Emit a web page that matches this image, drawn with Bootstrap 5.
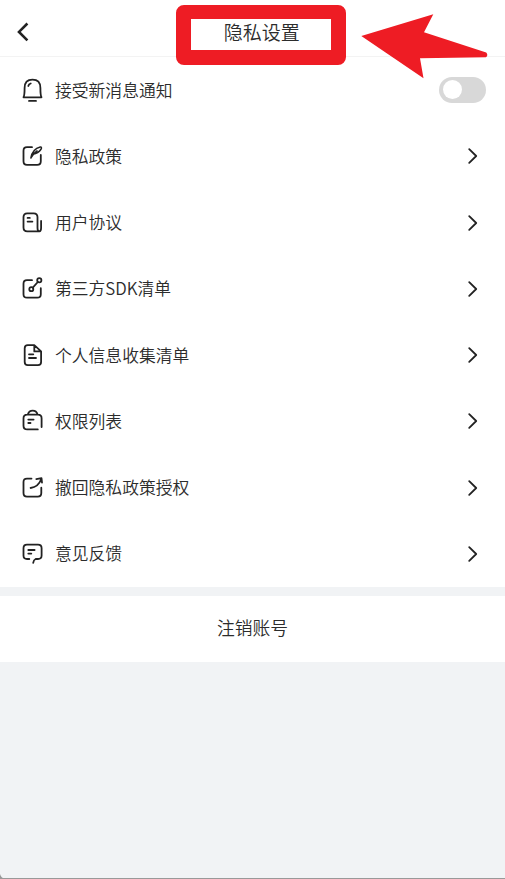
<!DOCTYPE html>
<html lang="zh-CN">
<head>
<meta charset="utf-8">
<meta name="viewport" content="width=device-width, initial-scale=1">
<title>隐私设置</title>
<link href="https://cdn.jsdelivr.net/npm/bootstrap@5.3.0/dist/css/bootstrap.min.css" rel="stylesheet">
<style>
body{font-family:"Noto Sans CJK SC",sans-serif;font-weight:350;background:#f1f3f5;color:#2c2c2c;height:879px;overflow:hidden}
.topbar{height:57px;border-bottom:1px solid #f3f3f3}
.topbar h1{font-size:19px;line-height:28px;padding:7px 0 0 18.6px;font-weight:350}
.back{left:16px;top:20px}
.frame-mark{left:176px;top:5px;width:170px;height:60px;border:15px solid #ee1c24;border-radius:8px;border-top-width:14px;z-index:2}
.arrow-mark{left:355px;top:8px;z-index:2}
.setting{height:66.25px;padding:0 19px 0 20px;font-size:16.8px}
.setting .label{margin-left:11px;flex:1;line-height:24px;padding-bottom:1.2px}
.chev{margin-right:7px}
.ico{fill:none;stroke:#222;stroke-width:1.8;stroke-linecap:round;stroke-linejoin:round;flex:none}
.toggle{width:47px;height:26px;border-radius:13px;background:#d8d8d8;padding:3px 4px 4px;border:0}
.toggle span{width:19px;height:19px;border-radius:50%;background:#fff}
.gap-band{height:9px}
.logout{height:66px;font-size:17.8px;color:#2c2c2c;font-weight:350}
.logout:hover{color:#2c2c2c}
.bottom-edge{height:1.5px;background:#999}
.bottom-edge svg{left:0;bottom:0}
</style>
<script src="https://cdn.jsdelivr.net/npm/bootstrap@5.3.0/dist/js/bootstrap.bundle.min.js"></script>
</head>
<body class="d-flex flex-column">
<header class="topbar bg-white position-relative d-flex align-items-center justify-content-center">
  <a href="#" class="back position-absolute d-block lh-1"><svg class="d-block" width="14" height="24" viewBox="0 0 14 24" fill="none" stroke="#222" stroke-width="2.6"><path d="M11.4 3.5 3 11.9l8.4 8.4"/></svg></a>
  <h1 class="m-0">隐私设置</h1>
  <div class="frame-mark position-absolute"></div>
  <svg class="arrow-mark position-absolute" width="140" height="76" viewBox="355 8 140 76"><path fill="#ee1c24" d="M361.3 36 433.3 14.2 424 32.3 486.2 52.5Q488.5 55 486 57.3L420 58.3 423.5 78.3Z"/></svg>
</header>
<main class="list-group list-group-flush bg-white rounded-0">
  <div class="setting d-flex align-items-center">
    <svg class="ico" width="24" height="24"><path d="M3.5 19.3C4.6 17.5 4.6 16.4 4.6 10 4.6 4.6 7.8 1.7 12.5 1.7s7.9 2.9 7.9 8.3c0 6.4 0 7.5 1.1 9.3Z"/><path d="M8.3 8Q8.8 6 10.7 5.5M9 22.9h7"/></svg>
    <span class="label">接受新消息通知</span>
    <button class="toggle d-flex align-items-center" aria-label="接受新消息通知"><span></span></button>
  </div>
  <div class="setting d-flex align-items-center">
    <svg class="ico" width="24" height="24"><path d="M12 3.2H7Q3.5 3.2 3.5 6.7V17.3Q3.5 20.9 7 20.9H17.2Q20.8 20.9 20.8 17.3V11"/><path stroke-width="1.5" d="M10.9 14C11.8 9 15.2 4.4 20.2 3.1 21.6 2.8 21.8 4.1 21 5.2 19.2 7.8 16 9.6 13 10.2M10.9 14Q13 9.4 17 6.8"/></svg>
    <span class="label">隐私政策</span>
    <svg class="ico chev" width="12" height="18"><path d="m2.2 2.2 7 6.8-7 6.8"/></svg>
  </div>
  <div class="setting d-flex align-items-center">
    <svg class="ico" width="24" height="24"><path d="M7.3 2.3h6.4q3.8 0 3.8 3.8v11q0 3.2 1.8 3.2 1.8-.2 1.8-3.4V9.9M7.3 2.3Q3.5 2.3 3.5 6.1V16.5Q3.5 20.3 7.3 20.3H18.9M7.6 6.9H9.8M7.6 10.6h4.8"/></svg>
    <span class="label">用户协议</span>
    <svg class="ico chev" width="12" height="18"><path d="m2.2 2.2 7 6.8-7 6.8"/></svg>
  </div>
  <div class="setting d-flex align-items-center">
    <svg class="ico" width="24" height="24"><path d="M12 3.2H7Q3.5 3.2 3.5 6.7V17.2Q3.5 20.7 7 20.7H17.2Q20.8 20.7 20.8 17.2V11.2"/><circle cx="11.3" cy="12.2" r="2"/><circle cx="19.3" cy="3.3" r="2.1"/><path d="m12.8 10.6 5-5.6"/></svg>
    <span class="label">第三方SDK清单</span>
    <svg class="ico chev" width="12" height="18"><path d="m2.2 2.2 7 6.8-7 6.8"/></svg>
  </div>
  <div class="setting d-flex align-items-center">
    <svg class="ico" width="24" height="24"><path d="M14.3 2.2H7.8Q4.7 2.2 4.7 5.3V19Q4.7 22.1 7.8 22.1H18Q21.1 22.1 21.1 19V8.4ZM14.3 2.2V8.4H21.1M9 11.3h4.3M9 15h7"/></svg>
    <span class="label">个人信息收集清单</span>
    <svg class="ico chev" width="12" height="18"><path d="m2.2 2.2 7 6.8-7 6.8"/></svg>
  </div>
  <div class="setting d-flex align-items-center">
    <svg class="ico" width="24" height="24"><path d="M17.8 20.4H7.2Q3.5 20.4 3.5 16.7V9.4Q3.5 5.7 7.2 5.7H18Q21.6 5.7 21.6 9.4V18M7.8 5.5Q9 1.7 12.7 1.7T17.6 5.5M8.3 10.6h5.3M8.3 14h2.2"/></svg>
    <span class="label">权限列表</span>
    <svg class="ico chev" width="12" height="18"><path d="m2.2 2.2 7 6.8-7 6.8"/></svg>
  </div>
  <div class="setting d-flex align-items-center">
    <svg class="ico" width="24" height="24"><path d="M11.5 2.6H7Q3.5 2.6 3.5 6.1V17Q3.5 20.6 7 20.6H17.7Q21.3 20.6 21.3 17V11.7M10.6 12Q18.3 11.2 21.4 2.8M16.3 3.2 21.5 2.2 22 6.7"/></svg>
    <span class="label">撤回隐私政策授权</span>
    <svg class="ico chev" width="12" height="18"><path d="m2.2 2.2 7 6.8-7 6.8"/></svg>
  </div>
  <div class="setting d-flex align-items-center">
    <svg class="ico" width="24" height="24"><path d="M9.3 17H7Q3.5 17 3.5 13.5V6.2Q3.5 2.7 7 2.7H18Q21.6 2.7 21.6 6.2V13.5Q21.6 17 18 17H15.6Q13.6 17.8 13.2 20.8M8.3 8h6.3M8.3 11.6h3"/></svg>
    <span class="label">意见反馈</span>
    <svg class="ico chev" width="12" height="18"><path d="m2.2 2.2 7 6.8-7 6.8"/></svg>
  </div>
</main>
<div class="gap-band"></div>
<button class="logout btn bg-white rounded-0 border-0 w-100 p-0 pb-1">注销账号</button>
<div class="bottom-edge mt-auto position-relative"><svg class="position-absolute" width="5" height="5"><path fill="#999" d="M0 0Q1 4 5 5H0Z"/></svg></div>
</body>
</html>
